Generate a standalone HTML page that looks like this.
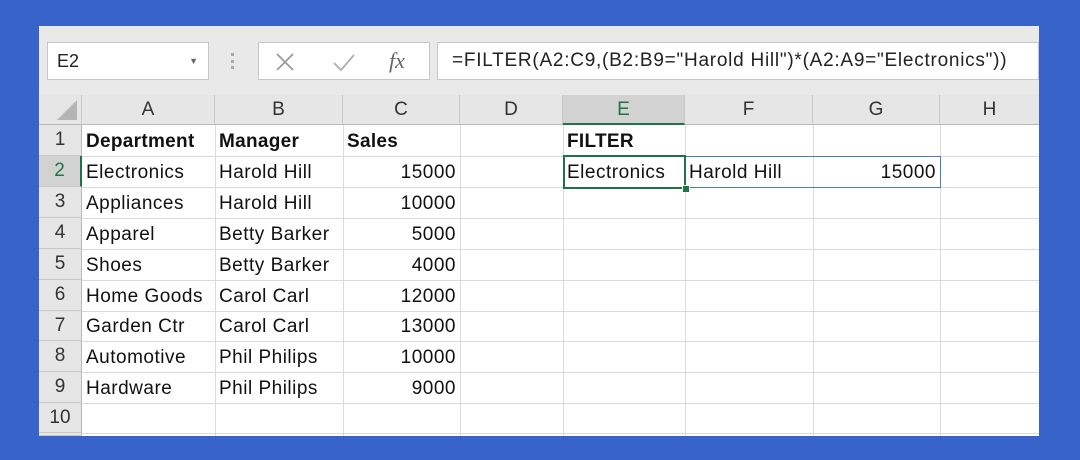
<!DOCTYPE html>
<html><head><style>
body{margin:0;width:1080px;height:460px;background:#3863c9;position:relative;overflow:hidden;font-family:"Liberation Sans",sans-serif;}
#p{position:absolute;left:39px;top:26px;width:1000px;height:410px;background:#fff;}
#tb{position:absolute;left:0;top:0;width:1000px;height:69px;background:#e9e9e9;}
.box{position:absolute;background:#fff;border:1px solid #c6c6c6;box-sizing:border-box;}
.c{position:absolute;box-sizing:border-box;font-size:19px;letter-spacing:0.5px;line-height:31px;color:#111;white-space:nowrap;padding:0 4px;}
.h{position:absolute;top:69px;height:30px;background:#e6e6e6;border-right:1px solid #c8c8c8;border-bottom:1px solid #b8b8b8;box-sizing:border-box;text-align:center;font-size:19px;line-height:30px;color:#333;}
.r{position:absolute;left:0;width:43px;background:#e6e6e6;border-bottom:1px solid #c8c8c8;border-right:1px solid #b8b8b8;box-sizing:border-box;text-align:center;font-size:19px;line-height:30px;color:#333;}
.vl{position:absolute;top:99px;width:1px;height:311px;background:#dadada;}
.hl{position:absolute;left:43px;width:957px;height:1px;background:#dadada;}
b{font-weight:bold;letter-spacing:0.3px;}
.rt{text-align:right;}
</style></head><body>
<div id="p">
<div id="tb"></div>
<div class="box" style="left:8px;top:16px;width:162px;height:38px;font-size:18px;line-height:36px;padding-left:9px;color:#222;">E2<span style="position:absolute;right:10px;top:0;font-size:9px;color:#666">▼</span></div>
<div style="position:absolute;left:192px;top:27px;width:3px;height:16px;border-left:3px dotted #aaa"></div>
<div class="box" style="left:219px;top:16px;width:172px;height:38px;"></div>
<svg style="position:absolute;left:236px;top:26px" width="20" height="20"><path d="M2 2L18 18M18 2L2 18" stroke="#9a9a9a" stroke-width="1.8"/></svg>
<svg style="position:absolute;left:293px;top:26px" width="24" height="20"><path d="M2 11L9 18L22 3" stroke="#b0b0b0" stroke-width="1.8" fill="none"/></svg>
<div style="position:absolute;left:350px;top:17px;font-size:22px;color:#666;line-height:36px;font-family:'Liberation Serif',serif;font-style:italic">fx</div>
<div class="box" style="left:398px;top:16px;width:602px;height:38px;font-size:19px;letter-spacing:0.75px;line-height:36px;padding-left:14px;color:#222;white-space:nowrap;overflow:hidden">=FILTER(A2:C9,(B2:B9="Harold Hill")*(A2:A9="Electronics"))</div>

<div class="h" style="left:0;width:43px;"><div style="position:absolute;right:4px;bottom:4px;width:0;height:0;border-left:20px solid transparent;border-bottom:20px solid #b5b5b5"></div></div>
<div class="h" style="left:43px;width:133px;">A</div>
<div class="h" style="left:176px;width:128px;">B</div>
<div class="h" style="left:304px;width:117px;">C</div>
<div class="h" style="left:421px;width:103px;">D</div>
<div class="h" style="left:524px;width:122px;background:#d2d2d2;color:#217346;border-bottom:2px solid #217346;">E</div>
<div class="h" style="left:646px;width:128px;">F</div>
<div class="h" style="left:774px;width:127px;">G</div>
<div class="h" style="left:901px;width:99px;border-right:none">H</div>

<div class="vl" style="left:176px"></div><div class="vl" style="left:304px"></div><div class="vl" style="left:421px"></div><div class="vl" style="left:524px"></div><div class="vl" style="left:646px"></div><div class="vl" style="left:774px"></div><div class="vl" style="left:901px"></div>
<div class="hl" style="top:130px"></div><div class="hl" style="top:161px"></div><div class="hl" style="top:192px"></div><div class="hl" style="top:223px"></div><div class="hl" style="top:254px"></div><div class="hl" style="top:285px"></div><div class="hl" style="top:315px"></div><div class="hl" style="top:346px"></div><div class="hl" style="top:377px"></div><div class="hl" style="top:407px"></div>

<div class="r" style="top:99px;height:31px">1</div>
<div class="r" style="top:130px;height:31px;background:#d2d2d2;color:#217346;border-right:2px solid #217346">2</div>
<div class="r" style="top:161px;height:31px">3</div>
<div class="r" style="top:192px;height:31px">4</div>
<div class="r" style="top:223px;height:31px">5</div>
<div class="r" style="top:254px;height:31px">6</div>
<div class="r" style="top:285px;height:30px">7</div>
<div class="r" style="top:315px;height:31px">8</div>
<div class="r" style="top:346px;height:31px">9</div>
<div class="r" style="top:377px;height:30px">10</div>
<div class="r" style="top:407px;height:3px"></div>

<div class="c" style="left:43px;top:100px"><b>Department</b></div>
<div class="c" style="left:176px;top:100px"><b>Manager</b></div>
<div class="c" style="left:304px;top:100px"><b>Sales</b></div>
<div class="c" style="left:524px;top:100px"><b>FILTER</b></div>

<div class="c" style="left:43px;top:131px">Electronics</div><div class="c" style="left:176px;top:131px">Harold Hill</div><div class="c rt" style="left:304px;top:131px;width:117px">15000</div>
<div class="c" style="left:43px;top:162px">Appliances</div><div class="c" style="left:176px;top:162px">Harold Hill</div><div class="c rt" style="left:304px;top:162px;width:117px">10000</div>
<div class="c" style="left:43px;top:193px">Apparel</div><div class="c" style="left:176px;top:193px">Betty Barker</div><div class="c rt" style="left:304px;top:193px;width:117px">5000</div>
<div class="c" style="left:43px;top:224px">Shoes</div><div class="c" style="left:176px;top:224px">Betty Barker</div><div class="c rt" style="left:304px;top:224px;width:117px">4000</div>
<div class="c" style="left:43px;top:255px">Home Goods</div><div class="c" style="left:176px;top:255px">Carol Carl</div><div class="c rt" style="left:304px;top:255px;width:117px">12000</div>
<div class="c" style="left:43px;top:285px">Garden Ctr</div><div class="c" style="left:176px;top:285px">Carol Carl</div><div class="c rt" style="left:304px;top:285px;width:117px">13000</div>
<div class="c" style="left:43px;top:316px">Automotive</div><div class="c" style="left:176px;top:316px">Phil Philips</div><div class="c rt" style="left:304px;top:316px;width:117px">10000</div>
<div class="c" style="left:43px;top:347px">Hardware</div><div class="c" style="left:176px;top:347px">Phil Philips</div><div class="c rt" style="left:304px;top:347px;width:117px">9000</div>

<div style="position:absolute;left:524px;top:130px;width:378px;height:32px;border:1px solid #4a7ebb;box-sizing:border-box"></div>
<div style="position:absolute;left:524px;top:129px;width:123px;height:34px;border:2px solid #217346;box-sizing:border-box"></div>
<div style="position:absolute;left:643px;top:159px;width:6px;height:6px;background:#217346;border:1px solid #fff"></div>
<div class="c" style="left:524px;top:131px">Electronics</div>
<div class="c" style="left:646px;top:131px">Harold Hill</div>
<div class="c rt" style="left:774px;top:131px;width:127px">15000</div>
</div>
</body></html>
